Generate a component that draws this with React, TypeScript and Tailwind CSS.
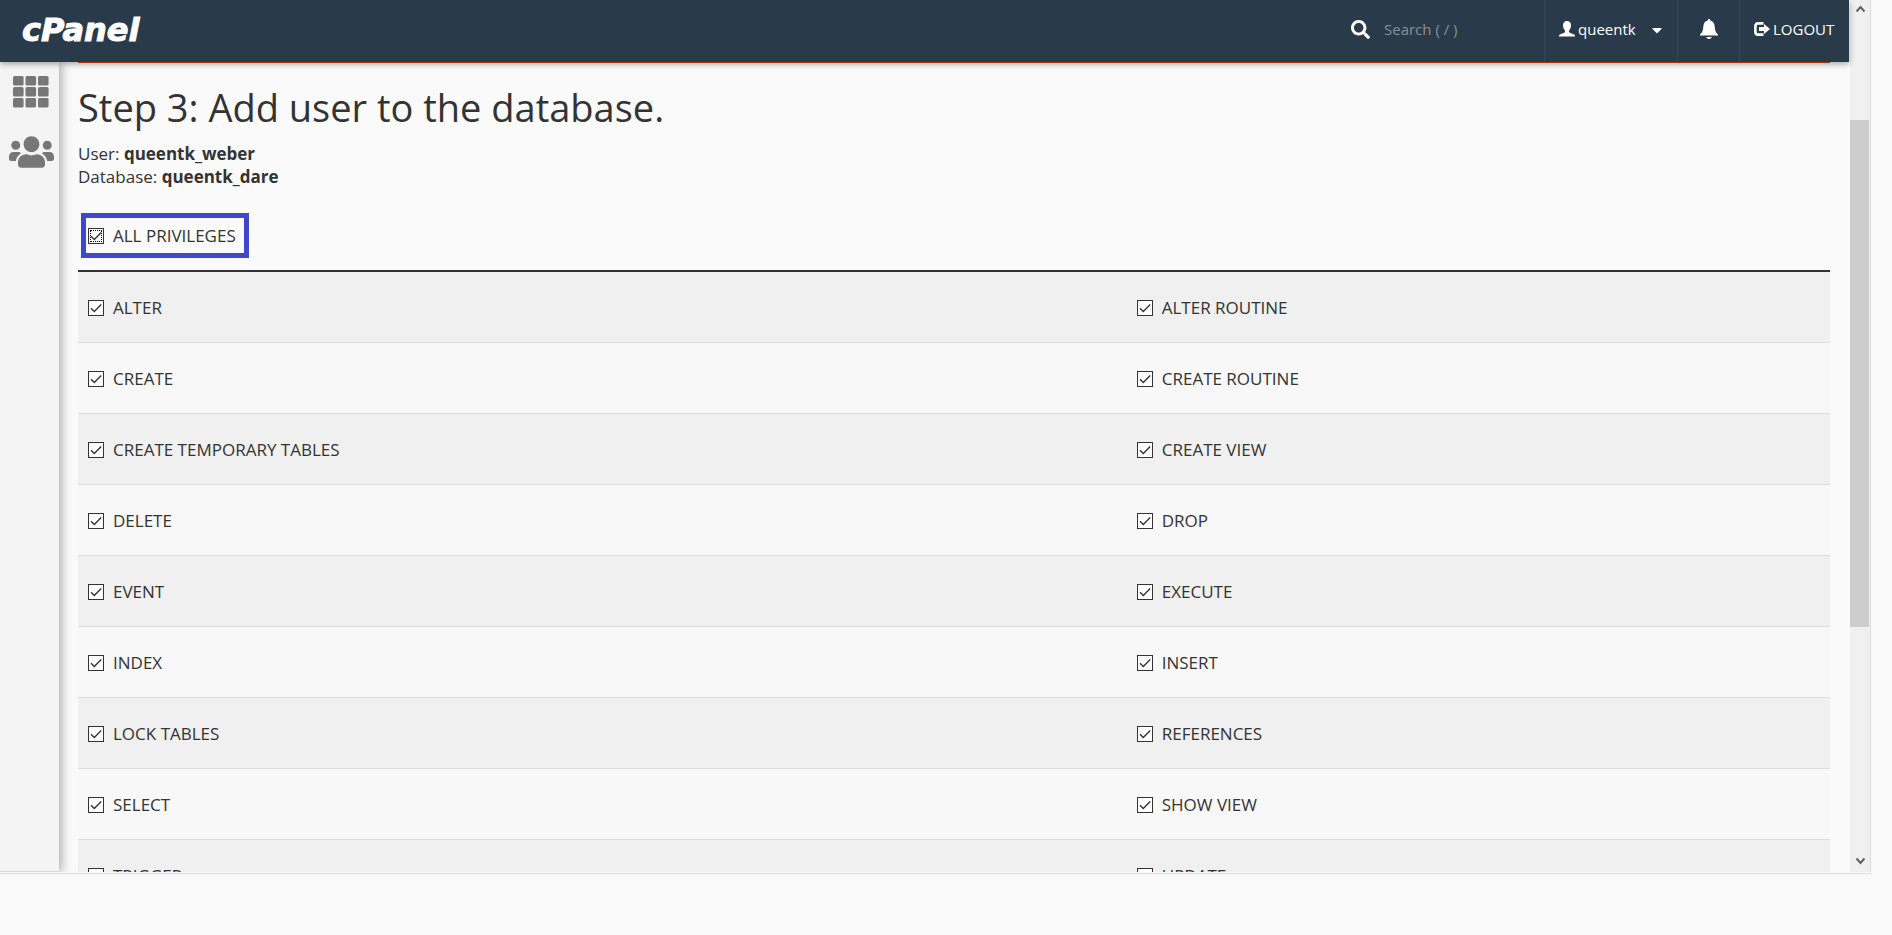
import { useState } from 'react'
import { FaSearch, FaCaretDown, FaUsers } from 'react-icons/fa'

const PRIVILEGES = [
  ['ALTER', 'ALTER ROUTINE'],
  ['CREATE', 'CREATE ROUTINE'],
  ['CREATE TEMPORARY TABLES', 'CREATE VIEW'],
  ['DELETE', 'DROP'],
  ['EVENT', 'EXECUTE'],
  ['INDEX', 'INSERT'],
  ['LOCK TABLES', 'REFERENCES'],
  ['SELECT', 'SHOW VIEW'],
  ['TRIGGER', 'UPDATE'],
]

const ALL = PRIVILEGES.flat()

function PrivilegeCheckbox({
  name,
  checked,
  focused = false,
  onChange,
}: {
  name: string
  checked: boolean
  focused?: boolean
  onChange: (checked: boolean) => void
}) {
  const id = 'priv-' + name.toLowerCase().replace(/ /g, '-')
  return (
    <div className="flex items-center gap-[9px]">
      <span className="relative flex h-4 w-4 shrink-0">
        <input
          id={id}
          type="checkbox"
          checked={checked}
          onChange={(e) => onChange(e.target.checked)}
          className="h-4 w-4 appearance-none border border-[#333] bg-white"
        />
        {focused && <span className="pointer-events-none absolute inset-[2px] border border-dotted border-black" />}
        {checked && (
          <svg viewBox="0 0 16 16" className="pointer-events-none absolute inset-0 h-4 w-4" fill="none" stroke="#333" strokeWidth="1.4">
            <path d="M3 8.2 L6.3 11.5 L13.2 4.6" />
          </svg>
        )}
      </span>
      <label htmlFor={id} className="text-[17px] leading-[23px] whitespace-nowrap">{name}</label>
    </div>
  )
}

function Header() {
  return (
    <header className="relative z-20 flex h-[62px] shrink-0 items-stretch bg-[#293a4a] text-white shadow-[0_2px_6px_rgba(0,0,0,0.35)]">
      <a href="#home" className="flex items-center pb-[2px] pl-[22px] font-['DejaVu_Sans'] text-[32px] leading-none font-bold italic [-webkit-text-stroke:1px_white]">
        cPanel
      </a>

      <div className="ml-auto flex w-[194px] items-center gap-[14px] pb-1 pl-px">
        <FaSearch className="h-[19px] w-[19px] shrink-0" />
        <input
          type="text"
          aria-label="Search"
          placeholder="Search ( / )"
          className="w-full min-w-0 bg-transparent text-[15px] outline-none placeholder:text-[#8a9096]"
        />
      </div>
      <button className="flex w-[133px] items-center border-l border-[#33465a] pb-1 pl-[14px] text-[15px]">
        <svg viewBox="0 0 16 16" className="h-4 w-4" fill="currentColor">
          <path d="M8 0 C10.6 0 12 1.8 12 4.4 C12 6.6 11 8.4 10 9.4 V10.6 C10 11.4 10.6 11.8 11.4 12.1 L14.6 13.3 C15.6 13.7 16 14.3 16 15.6 H0 C0 14.3 .4 13.7 1.4 13.3 L4.6 12.1 C5.4 11.8 6 11.4 6 10.6 V9.4 C5 8.4 4 6.6 4 4.4 C4 1.8 5.4 0 8 0 Z" />
        </svg>
        <span className="ml-[3px]">queentk</span>
        <FaCaretDown className="mt-[2px] ml-[15px] h-4 w-3" />
      </button>
      <button aria-label="Notifications" className="flex w-[62px] items-center justify-center border-l border-[#33465a] pb-[5px]">
        <svg viewBox="0 0 18 20" className="h-5 w-[18px]" fill="currentColor">
          <path d="M9 0 C9.8 0 10.3 .6 10.3 1.6 C13 2.3 14.4 4.4 14.7 7.4 C15 11.5 15.6 13.4 18 15.4 V16.6 H0 V15.4 C2.4 13.4 3 11.5 3.3 7.4 C3.6 4.4 5 2.3 7.7 1.6 C7.7 .6 8.2 0 9 0 Z" />
          <path d="M6.2 18 H11.8 C11.4 19.3 10.4 20 9 20 C7.6 20 6.6 19.3 6.2 18 Z" />
        </svg>
      </button>
      <a href="#logout" className="flex w-[110px] items-center gap-[3px] border-l border-[#33465a] pb-1 pl-[14px] text-[15px]">
        <svg viewBox="0 0 16 14" className="h-[14px] w-4" fill="none">
          <path d="M9.5 1.4 H4 Q1.4 1.4 1.4 4 V10 Q1.4 12.6 4 12.6 H9.5" stroke="currentColor" strokeWidth="2.6" />
          <path d="M5 5 H10 V2 L16 7 L10 12 V9 H5 Z" fill="currentColor" />
        </svg>
        LOGOUT
      </a>
    </header>
  )
}

function Sidebar() {
  return (
    <nav className="relative z-10 flex w-[59px] shrink-0 flex-col items-center border-b border-[#d8d8d8] bg-[#f4f4f4] text-[#777] shadow-[2px_0_10px_rgba(0,0,0,0.35)]">
      <a href="#tools" aria-label="Tools" className="mt-[14px] ml-[3px]">
        <svg viewBox="0 0 36 32" className="h-8 w-9" fill="currentColor">
          {[0, 11, 22].map((y) =>
            [0, 12.5, 25].map((x) => <rect key={x + '-' + y} x={x} y={y} width="10.6" height="9.6" rx="1.6" />)
          )}
        </svg>
      </a>
      <a href="#users" aria-label="User Manager" className="mt-[26px] ml-[3px]">
        <FaUsers className="h-9 w-[45px]" />
      </a>
    </nav>
  )
}

function Scrollbar() {
  return (
    <div className="flex w-[21px] shrink-0 flex-col items-center border-l border-white bg-[#f0f0f0] pt-[5px] pb-[7px]">
      <svg viewBox="0 0 9 8" className="h-2 w-[9px]" fill="none" stroke="#606060" strokeWidth="2">
        <path d="M0.5 6.5 L4.5 2 L8.5 6.5" />
      </svg>
      <div className="flex w-full flex-1 flex-col pr-px">
        <div className="flex-[107]" />
        <div className="flex-[507] bg-[#cdcdcd]" />
        <div className="flex-[230]" />
      </div>
      <svg viewBox="0 0 9 8" className="h-2 w-[9px]" fill="none" stroke="#606060" strokeWidth="2">
        <path d="M0.5 1.5 L4.5 6 L8.5 1.5" />
      </svg>
    </div>
  )
}

export default function App() {
  const [granted, setGranted] = useState<string[]>(ALL)

  const toggle = (name: string, on: boolean) =>
    setGranted((prev) => (on ? [...prev, name] : prev.filter((p) => p !== name)))

  return (
    <div className="flex h-screen flex-col bg-[#f9f9f9] pr-[21px] pb-[61px] font-['Open_Sans','Noto_Sans',sans-serif] text-[#333]">
      <div className="flex min-h-0 flex-1 border-r border-b border-[#ddd] pb-px">
        <div className="flex min-w-0 flex-1 flex-col">
          <Header />
          <div className="flex min-h-0 flex-1 overflow-hidden">
            <Sidebar />
            <main className="min-w-0 flex-1 overflow-hidden bg-[#fafafa] px-[19px]">
              {/* bottom edge of the alert, which sits above the header shadow */}
              <div className="relative z-30 h-px bg-[#a83200]" />
              <h1 className="mt-4 text-[38px] leading-[56px]">Step 3: Add user to the database.</h1>
              <p className="mt-[7px] text-[17px] leading-[23px]">
                User: <b>queentk_weber</b>
                <br />
                Database: <b>queentk_dare</b>
              </p>
              <div className="mt-[25px] ml-[3px] flex">
                <div className="border-[5px] border-[#3f48cc] py-[6px] pr-2 pl-[2px]">
                  <PrivilegeCheckbox
                    name="ALL PRIVILEGES"
                    checked={granted.length === ALL.length}
                    focused
                    onChange={(on) => setGranted(on ? ALL : [])}
                  />
                </div>
              </div>
              <table className="mt-3 w-full border-collapse border-t-2 border-[#333]">
                <tbody>
                  {PRIVILEGES.map((row) => (
                    <tr key={row[0]} className="h-[71px] border-b border-[#ddd] odd:bg-[#f0f0f0] even:bg-[#f8f8f8]">
                      {row.map((name) => (
                        <td key={name} className="px-[10px] pt-[2px]">
                          <PrivilegeCheckbox name={name} checked={granted.includes(name)} onChange={(on) => toggle(name, on)} />
                        </td>
                      ))}
                    </tr>
                  ))}
                </tbody>
              </table>
            </main>
          </div>
        </div>
        <Scrollbar />
      </div>
    </div>
  )
}
